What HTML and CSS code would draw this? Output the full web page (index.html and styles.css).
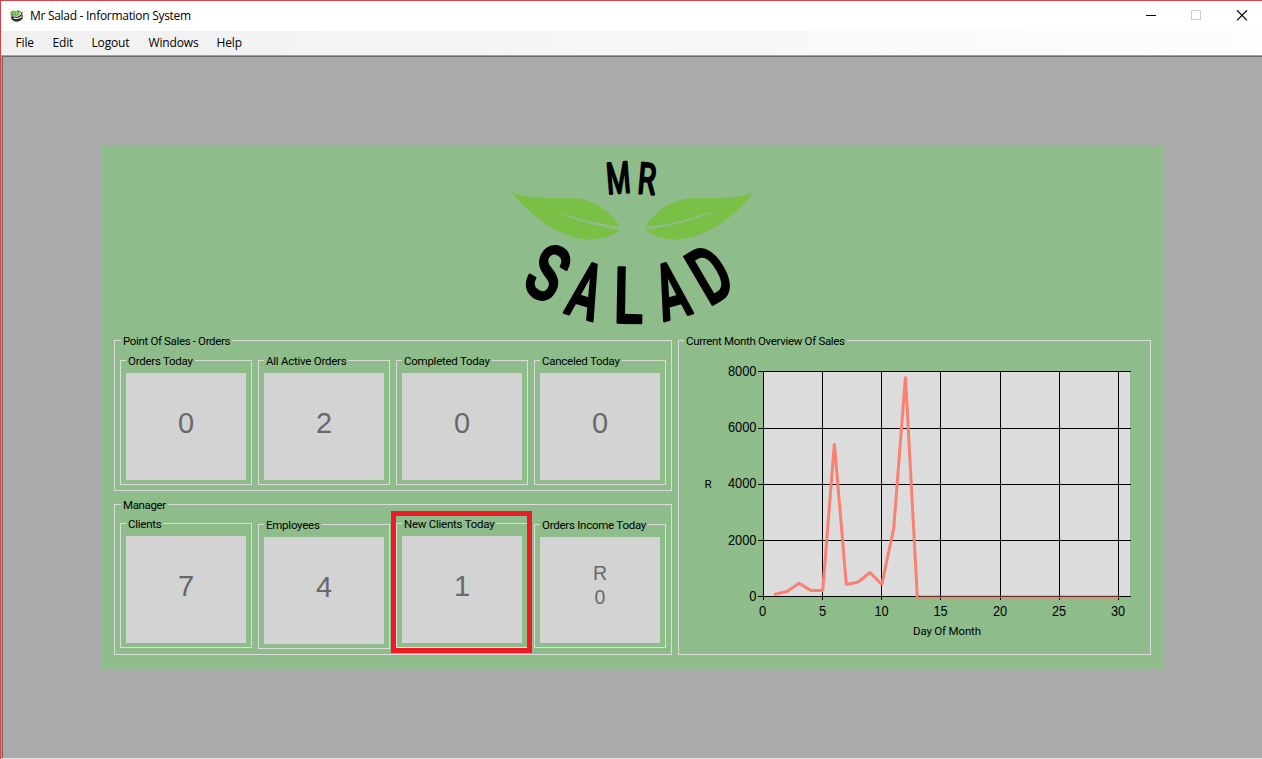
FILE: index.html
```html
<!DOCTYPE html>
<html lang="en">
<head>
<meta charset="utf-8">
<title>Mr Salad - Information System</title>
<link rel="stylesheet" href="styles.css">
</head>
<body>
<div class="window">
  <header class="titlebar">
    <svg class="app-icon" width="16" height="16" viewBox="0 0 16 16">
      <rect width="16" height="16" fill="#f8f8f8"/>
      <path d="M2 8 Q1.500 12 6 13.500 Q10 14.500 13.500 11 L14 7 Q10 10 2 8Z" fill="#2b2f2b"/>
      <path d="M4.500 10 Q9 11.500 13 8.500" stroke="#f4f4f4" stroke-width="1.200" fill="none"/>
      <path d="M1.500 4 L4 2.500 L7 3.500 L9 2 L12 3.500 L11 6 L8 8 L5 7.500 L2 9Z" fill="#67ad45"/>
      <path d="M4.500 4 L5.500 6 M8 4 L7.500 6.500 M10.500 4.500 L10 6" stroke="#dceed5" stroke-width=".8"/>
      <path d="M9.500 8.500 Q13 8 13 4" stroke="#2b2f2b" stroke-width="1.200" fill="none"/>
    </svg>
    <span class="title">Mr Salad - Information System</span>
    <svg class="controls" width="104" height="12" viewBox="0 0 104 12">
      <path d="M0 5.500H10" stroke="#000"/>
      <rect x="45.500" y=".5" width="9" height="9" fill="none" stroke="#ccc"/>
      <path d="M91 0.300L101 10.300M101 0.300L91 10.300" stroke="#000" stroke-width="1.200"/>
    </svg>
  </header>
  <nav class="menu">
    <span class="m-file">File</span><span class="m-edit">Edit</span><span class="m-logout">Logout</span><span class="m-windows">Windows</span><span>Help</span>
  </nav>
  <main class="client">
    <section class="dashboard">
      <svg class="logo" width="270" height="180" viewBox="0 0 270 180">
        <path d="M11.500 42.500 C31 49 54 48 74 48 C95 50 111 61 120 77 C101 74 76 68 51 60.500 C76 70 99 77 120 80 C111 87 98 90 85 89.500 C57 86 30 65 11.500 42.500Z" fill="#7abf46"/>
        <path d="M254 42.500 C234 49 212 48 192 48 C172 50 157 59 145 77 C170 75 195 67 218 59.500 C196 70 168 77 145 80 C154 87 166 90 179 89.500 C209 87 236 65 254 42.500Z" fill="#7abf46"/>
        <g class="letters small">
          <text transform="translate(118.300 28.100) rotate(-4.500) scale(.64 1)" y="15">M</text>
          <text transform="translate(147 28.900) rotate(5) scale(.68 1)" y="15">R</text>
        </g>
        <g class="letters big">
          <text transform="translate(48 122.500) rotate(29) scale(.75 1.020)" y="27">S</text>
          <text transform="translate(86.200 140.500) rotate(17) scale(.62 1.020)" y="27">A</text>
          <text transform="translate(128.500 145.200) rotate(1) scale(.71 1.020)" y="27">L</text>
          <text transform="translate(171.200 140.500) rotate(-15.500) scale(.62 1.020)" y="27">A</text>
          <text transform="translate(209.800 124) rotate(-30.500) scale(.7 1.030)" y="27">D</text>
        </g>
      </svg>
      <div class="columns">
        <div class="left">
          <section class="group">
            <h2>Point Of Sales - Orders</h2>
            <div class="cards">
              <article class="card"><h3>Orders Today</h3><div class="tile">0</div></article>
              <article class="card"><h3>All Active Orders</h3><div class="tile">2</div></article>
              <article class="card"><h3>Completed Today</h3><div class="tile">0</div></article>
              <article class="card"><h3>Canceled Today</h3><div class="tile">0</div></article>
            </div>
          </section>
          <section class="group manager">
            <h2>Manager</h2>
            <div class="cards">
              <article class="card"><h3>Clients</h3><div class="tile">7</div></article>
              <article class="card lower"><h3>Employees</h3><div class="tile">4</div></article>
              <article class="card marked"><h3>New Clients Today</h3><div class="tile">1</div></article>
              <article class="card lower short"><h3>Orders Income Today</h3><div class="tile income">R<br>0</div></article>
            </div>
          </section>
        </div>
        <section class="group sales">
          <h2>Current Month Overview Of Sales</h2>
          <svg class="chart" width="471" height="300" viewBox="679 348 471 300">
            <rect x="763" y="371" width="367" height="225" fill="#dcdcdc"/>
            <g stroke="#000" shape-rendering="crispEdges">
              <path d="M758 371.500H1131M758 428.500H1131M758 484.500H1131M758 540.500H1131M758 596.500H1131"/>
              <path d="M763.500 371V600M822.500 371V600M881.500 371V600M940.500 371V600M1000.500 371V600M1059.500 371V600M1118.500 371V600"/>
            </g>
            <path d="M775.500 594.300L787 591.500L799 583.300L810.700 590.400H822.700L834.400 443.500L846.300 584.500L858.200 582L870 572.500L881.800 584.500L893.700 528.500L905.500 376.500L917.300 597H1118" fill="none" stroke="#fa8072" stroke-width="3" stroke-linejoin="bevel" stroke-linecap="square"/>
            <path d="M918 596.500H1131M940.500 594V600M1000.500 594V600M1059.500 594V600M1118.500 594V600" stroke="#000" opacity=".6"/>
            <g class="ticks end">
              <text x="756.500" y="376" textLength="28.500" lengthAdjust="spacingAndGlyphs">8000</text>
              <text x="756.500" y="432" textLength="28.500" lengthAdjust="spacingAndGlyphs">6000</text>
              <text x="756.500" y="488" textLength="28.500" lengthAdjust="spacingAndGlyphs">4000</text>
              <text x="756.500" y="545" textLength="28.500" lengthAdjust="spacingAndGlyphs">2000</text>
              <text x="756.500" y="601" textLength="7.200" lengthAdjust="spacingAndGlyphs">0</text>
            </g>
            <g class="ticks mid">
              <text x="762.500" y="616" textLength="7.200" lengthAdjust="spacingAndGlyphs">0</text>
              <text x="822.500" y="616" textLength="7.200" lengthAdjust="spacingAndGlyphs">5</text>
              <text x="881.500" y="616" textLength="14.200" lengthAdjust="spacingAndGlyphs">10</text>
              <text x="940.500" y="616" textLength="14.200" lengthAdjust="spacingAndGlyphs">15</text>
              <text x="1000" y="616" textLength="14.200" lengthAdjust="spacingAndGlyphs">20</text>
              <text x="1059" y="616" textLength="14.200" lengthAdjust="spacingAndGlyphs">25</text>
              <text x="1118" y="616" textLength="14.200" lengthAdjust="spacingAndGlyphs">30</text>
            </g>
            <g class="axis"><text x="708" y="488">R</text><text x="947" y="635" textLength="68">Day Of Month</text></g>
          </svg>
        </section>
      </div>
    </section>
  </main>
</div>
</body>
</html>
```
FILE: styles.css
```css
*, *::after { box-sizing: border-box; }
body { margin: 0; overflow: hidden; font-family: "Liberation Sans", Arial, sans-serif; color: #000; }
.window { width: 1262px; height: 759px; border-top: 1px solid #d5434b; border-left: 1px solid #d5434b; display: flex; flex-direction: column; background: #fff; }
.titlebar { height: 30px; display: flex; align-items: center; padding: 0 12px 0 8px; font: 12px/16px "Open Sans", sans-serif; }
.title { margin-left: 5px; letter-spacing: -.29px; }
.controls { margin-left: auto; }
.menu { height: 24px; display: flex; padding-left: 14.500px; background: linear-gradient(90deg, #f0f0f0, #fdfdfd); font: 12px/24px "Open Sans", sans-serif; letter-spacing: -.15px; }
.m-file { width: 37px; }
.m-edit { width: 39px; }
.m-logout { width: 57px; }
.m-windows { width: 68px; }
.client { flex: 1; border-top: 1px solid #a0a0a0; border-left: 1px solid #a0a0a0; border-bottom: 1px solid #e3e3e3; background: #ababab; box-shadow: inset 1px 1px #696969; padding: 90px 0 0 100px; }
.dashboard { width: 1062px; height: 523px; background: #8fbc8b; padding: 4px 12px 0; }
.logo { display: block; margin: 0 auto 10px 386px; overflow: visible; }
.letters { text-anchor: middle; font-family: Roboto, sans-serif; font-weight: 500; stroke: #000; stroke-linejoin: round; }
.letters text { vector-effect: non-scaling-stroke; }
.small { font-size: 43px; font-weight: 400; stroke-width: 2px; }
.big { font-size: 76px; stroke-width: 2.200px; }
.columns { display: flex; gap: 6px; }
.left { width: 558px; display: flex; flex-direction: column; gap: 13px; }
.group { height: 151px; border: 1px solid #dcdcdc; padding: 0 5px; }
.sales { width: 473px; height: 315px; padding: 0; }
h2, h3 { margin: -6px 0 0; width: max-content; background: #8fbc8b; font-family: Roboto, sans-serif; font-size: 11.500px; font-weight: 400; line-height: 13px; padding: 0 2px; letter-spacing: -.25px; }
h2 { margin-left: 1px; letter-spacing: -.35px; }
.sales h2 { margin-left: 5px; letter-spacing: -.32px; }
.cards { display: flex; gap: 6px; margin-top: 12px; }
.manager .cards { margin-top: 11px; }
.card { width: 132px; height: 125px; border: 1px solid #dcdcdc; padding: 0 5px; }
.tile { height: 107px; margin-top: 5px; background: #d3d3d3; color: #696969; display: flex; align-items: center; justify-content: center; font-size: 29px; padding-bottom: 6px; }
.lower { margin-top: 1px; }
.short { height: 124px; }
.short .tile { height: 106px; }
.tile.income { font-size: 19.500px; line-height: 24px; text-align: center; padding-bottom: 10px; }
.marked { position: relative; }
.marked::after { content: ""; position: absolute; left: -6px; top: -13px; width: 141px; height: 142px; border: 5px solid #ed1c24; }
.chart { display: block; }
.ticks { font-size: 14px; }
.end { text-anchor: end; }
.mid, .axis { text-anchor: middle; }
.axis { font-family: Roboto, sans-serif; font-size: 11.500px; }
```
